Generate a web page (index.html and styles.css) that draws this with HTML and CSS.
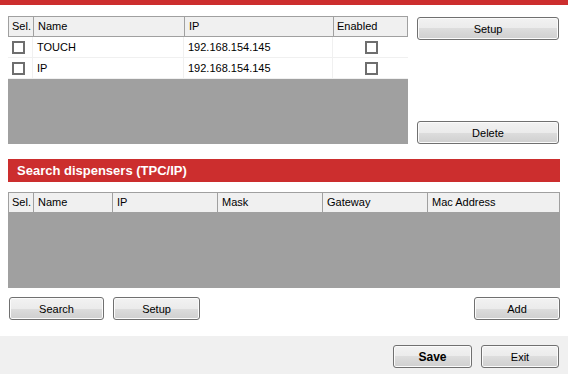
FILE: index.html
```html
<!DOCTYPE html>
<html>
<head>
<meta charset="utf-8">
<link rel="stylesheet" href="styles.css">
</head>
<body>
<div class="topbar"></div>
<div class="section1">
  <div class="grid grid1">
    <div class="row head">
      <div class="cell c-sel">Sel.</div>
      <div class="cell c-name">Name</div>
      <div class="cell c-ip">IP</div>
      <div class="cell c-en">Enabled</div>
    </div>
    <div class="row item">
      <div class="cell c-sel"><span class="chk"></span></div>
      <div class="cell c-name">TOUCH</div>
      <div class="cell c-ip">192.168.154.145</div>
      <div class="cell c-en center"><span class="chk"></span></div>
    </div>
    <div class="row item">
      <div class="cell c-sel"><span class="chk"></span></div>
      <div class="cell c-name">IP</div>
      <div class="cell c-ip">192.168.154.145</div>
      <div class="cell c-en center"><span class="chk"></span></div>
    </div>
    <div class="fill"></div>
  </div>
  <div class="side">
    <button class="btn wide">Setup</button>
    <button class="btn wide">Delete</button>
  </div>
</div>
<div class="band">Search dispensers (TPC/IP)</div>
<div class="grid grid2">
  <div class="row head">
    <div class="cell s-sel">Sel.</div>
    <div class="cell s-name">Name</div>
    <div class="cell s-ip">IP</div>
    <div class="cell s-mask">Mask</div>
    <div class="cell s-gw">Gateway</div>
    <div class="cell s-mac">Mac Address</div>
  </div>
  <div class="fill"></div>
</div>
<div class="actions">
  <button class="btn b-search">Search</button>
  <button class="btn b-setup">Setup</button>
  <span class="spacer"></span>
  <button class="btn b-add">Add</button>
</div>
<div class="footer">
  <button class="btn b-save">Save</button>
  <button class="btn b-exit">Exit</button>
</div>
</body>
</html>
```
FILE: styles.css
```css
html, body {
  margin: 0;
  padding: 0;
  background: #ffffff;
  width: 568px;
  height: 374px;
  overflow: hidden;
  font-family: "Liberation Sans", Arial, sans-serif;
  font-size: 11px;
  color: #000;
}
body {
  display: flex;
  flex-direction: column;
}
.topbar {
  height: 5px;
  background: #cc2e2e;
  flex: none;
}
.section1 {
  display: flex;
  padding: 11px 8px 0 8px;
  gap: 9px;
  flex: none;
}
.grid {
  display: flex;
  flex-direction: column;
  background: #a0a0a0;
  box-sizing: border-box;
  flex: none;
}
.grid1 {
  width: 400px;
  height: 128px;
}
.row {
  display: flex;
  flex: none;
}
.row.head {
  background: #f0f0f0;
  border: 1px solid #a0a0a0;
  box-sizing: border-box;
  height: 21px;
}
.row.head .cell {
  border-right: 1px solid #a0a0a0;
  line-height: 19px;
}
.row.head .cell:last-child {
  border-right: none;
}
.row.item {
  height: 21px;
  background: #fff;
  border-bottom: 1px solid #f0f0f0;
  box-sizing: border-box;
}
.row.item .cell {
  border-right: 1px solid #f0f0f0;
  line-height: 20px;
}
.row.item .cell:last-child {
  border-right: none;
}
.cell {
  box-sizing: border-box;
  padding-left: 4px;
  white-space: nowrap;
  overflow: hidden;
}
.center {
  display: flex;
  justify-content: center;
  align-items: center;
  padding-left: 0;
}
.c-sel { width: 25px; display: flex; align-items: center; }
.c-name { width: 151px; }
.c-ip { width: 149px; }
.c-en { flex: 1; }
.row.head .c-sel { display: block; padding-left: 3px; }
.row.head .c-en { padding-left: 3px; }
.chk {
  display: inline-block;
  width: 13px;
  height: 13px;
  box-sizing: border-box;
  border: 2px solid #6e6e6e;
  background: #fff;
}
.row.item .c-sel { padding-left: 4px; }
.row.item .c-en .chk { margin-left: 1px; }
.fill {
  flex: 1;
}
.grid1 .fill { margin-top: 1px; }
.side {
  width: 143px;
  height: 128px;
  display: flex;
  flex-direction: column;
  justify-content: space-between;
  padding-top: 1px;
  box-sizing: border-box;
}
.btn {
  font-family: "Liberation Sans", Arial, sans-serif;
  font-size: 11px;
  color: #000;
  height: 23px;
  box-sizing: border-box;
  border: 1px solid #707070;
  border-radius: 3px;
  background: linear-gradient(#f2f2f2 0%, #ebebeb 50%, #dddddd 50%, #cfcfcf 100%);
  padding: 0;
  margin: 0;
  box-shadow: inset 0 0 0 1px #fbfbfb;
}
.wide { width: 142px; }
.band {
  flex: none;
  margin: 15px 8px 0 8px;
  height: 23px;
  background: #cc2e2e;
  color: #fff;
  font-weight: bold;
  font-size: 13px;
  line-height: 23px;
  padding-left: 9px;
}
.grid2 {
  margin: 10px 8px 0 8px;
  height: 96px;
}
.s-sel { width: 25px; padding-left: 3px; }
.s-name { width: 79px; }
.s-ip { width: 105px; }
.s-mask { width: 105px; }
.s-gw { width: 105px; }
.s-mac { flex: 1; }
.actions {
  flex: none;
  display: flex;
  margin: 9px 8px 0 9px;
  gap: 9px;
}
.spacer { flex: 1; }
.b-search { width: 95px; }
.b-setup { width: 87px; }
.b-add { width: 86px; }
.footer {
  flex: 1;
  margin-top: 16px;
  background: #f0f0f0;
  display: flex;
  justify-content: flex-end;
  align-items: flex-start;
  padding: 9px 9px 0 0;
  gap: 9px;
  box-sizing: border-box;
}
.b-save { width: 79px; font-weight: bold; font-size: 12px; }
.b-exit { width: 78px; }
```
